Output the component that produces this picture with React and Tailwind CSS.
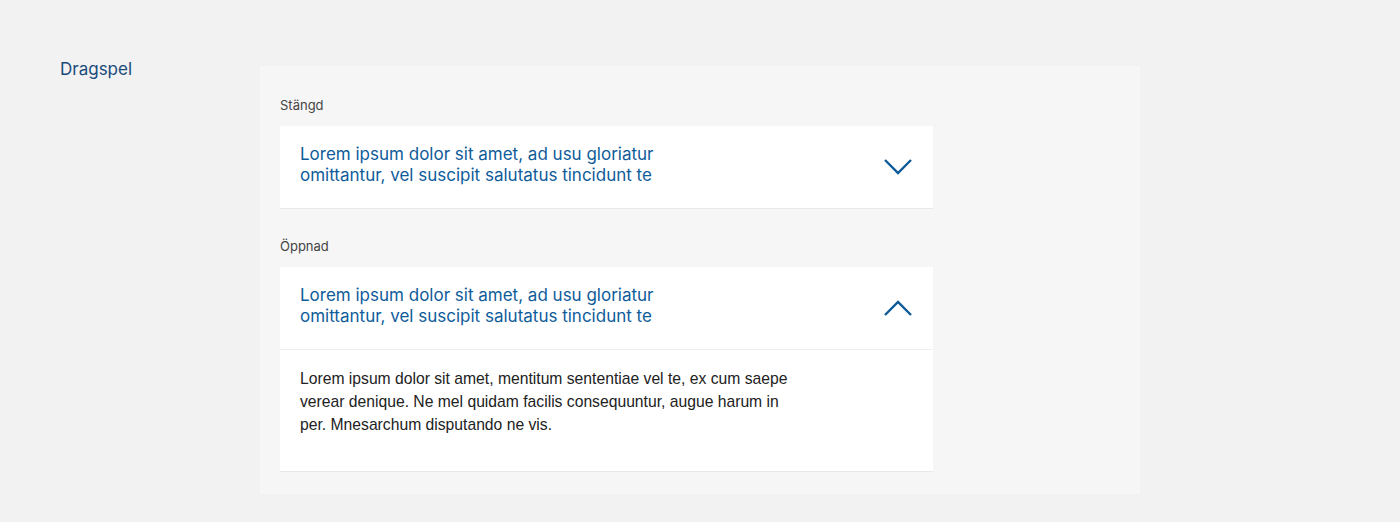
import { useState } from "react"

function Chevron({ open }) {
 return (
  <svg width="30" height="18" viewBox="0 0 30 18" fill="none" className="shrink-0">
   {open
    ? <path d="M2 16 L15 3 L28 16" stroke="#0d5a98" strokeWidth="2.4" />
    : <path d="M2 2 L15 15 L28 2" stroke="#0d5a98" strokeWidth="2.4" />}
  </svg>
 )
}

function Accordion({ title, body, defaultOpen }) {
 const [open, setOpen] = useState(defaultOpen)
 return (
  <div className="bg-white w-[653px] shadow-[0_1px_0_#e8e8e8]">
   <button
    onClick={() => setOpen(!open)}
    className="w-full flex items-center justify-between px-5 py-[18px] text-left"
   >
    <span className="max-w-[380px] pb-1 text-[17px] leading-[21px] text-[#0f5c9a] font-['Inter',sans-serif]">
     {title}
    </span>
    <Chevron open={open} />
   </button>
   {open && (
    <div className="border-t border-[#eeeeee] px-5 pt-[17px] pb-[35px]">
     <p className="max-w-[500px] text-[15.7px] leading-[23px] text-[#222] font-['Liberation_Sans',Arial,sans-serif]">
      {body}
     </p>
    </div>
   )}
  </div>
 )
}

export default function App() {
 const title = "Lorem ipsum dolor sit amet, ad usu gloriatur omittantur, vel suscipit salutatus tincidunt te"
 const body = "Lorem ipsum dolor sit amet, mentitum sententiae vel te, ex cum saepe verear denique. Ne mel quidam facilis consequuntur, augue harum in per. Mnesarchum disputando ne vis."

 return (
  <div className="min-h-[522px] bg-[#f2f2f2] font-['Inter',sans-serif] flex pt-[56px] pl-[60px]">
   <div className="w-[200px] text-[17px] leading-[26px] text-[#1a4b7c]">
    Dragspel
   </div>

   <div className="w-[880px] h-[428px] mt-[10px] bg-[#f6f6f6] px-5 pt-[28px]">
    <div className="text-[13px] leading-[22px] text-[#444] mb-[10px]">Stängd</div>
    <Accordion title={title} body={body} defaultOpen={false} />

    <div className="text-[13px] leading-[22px] text-[#444] mt-[27px] mb-[10px]">Öppnad</div>
    <Accordion title={title} body={body} defaultOpen={true} />
   </div>
  </div>
 )
}
